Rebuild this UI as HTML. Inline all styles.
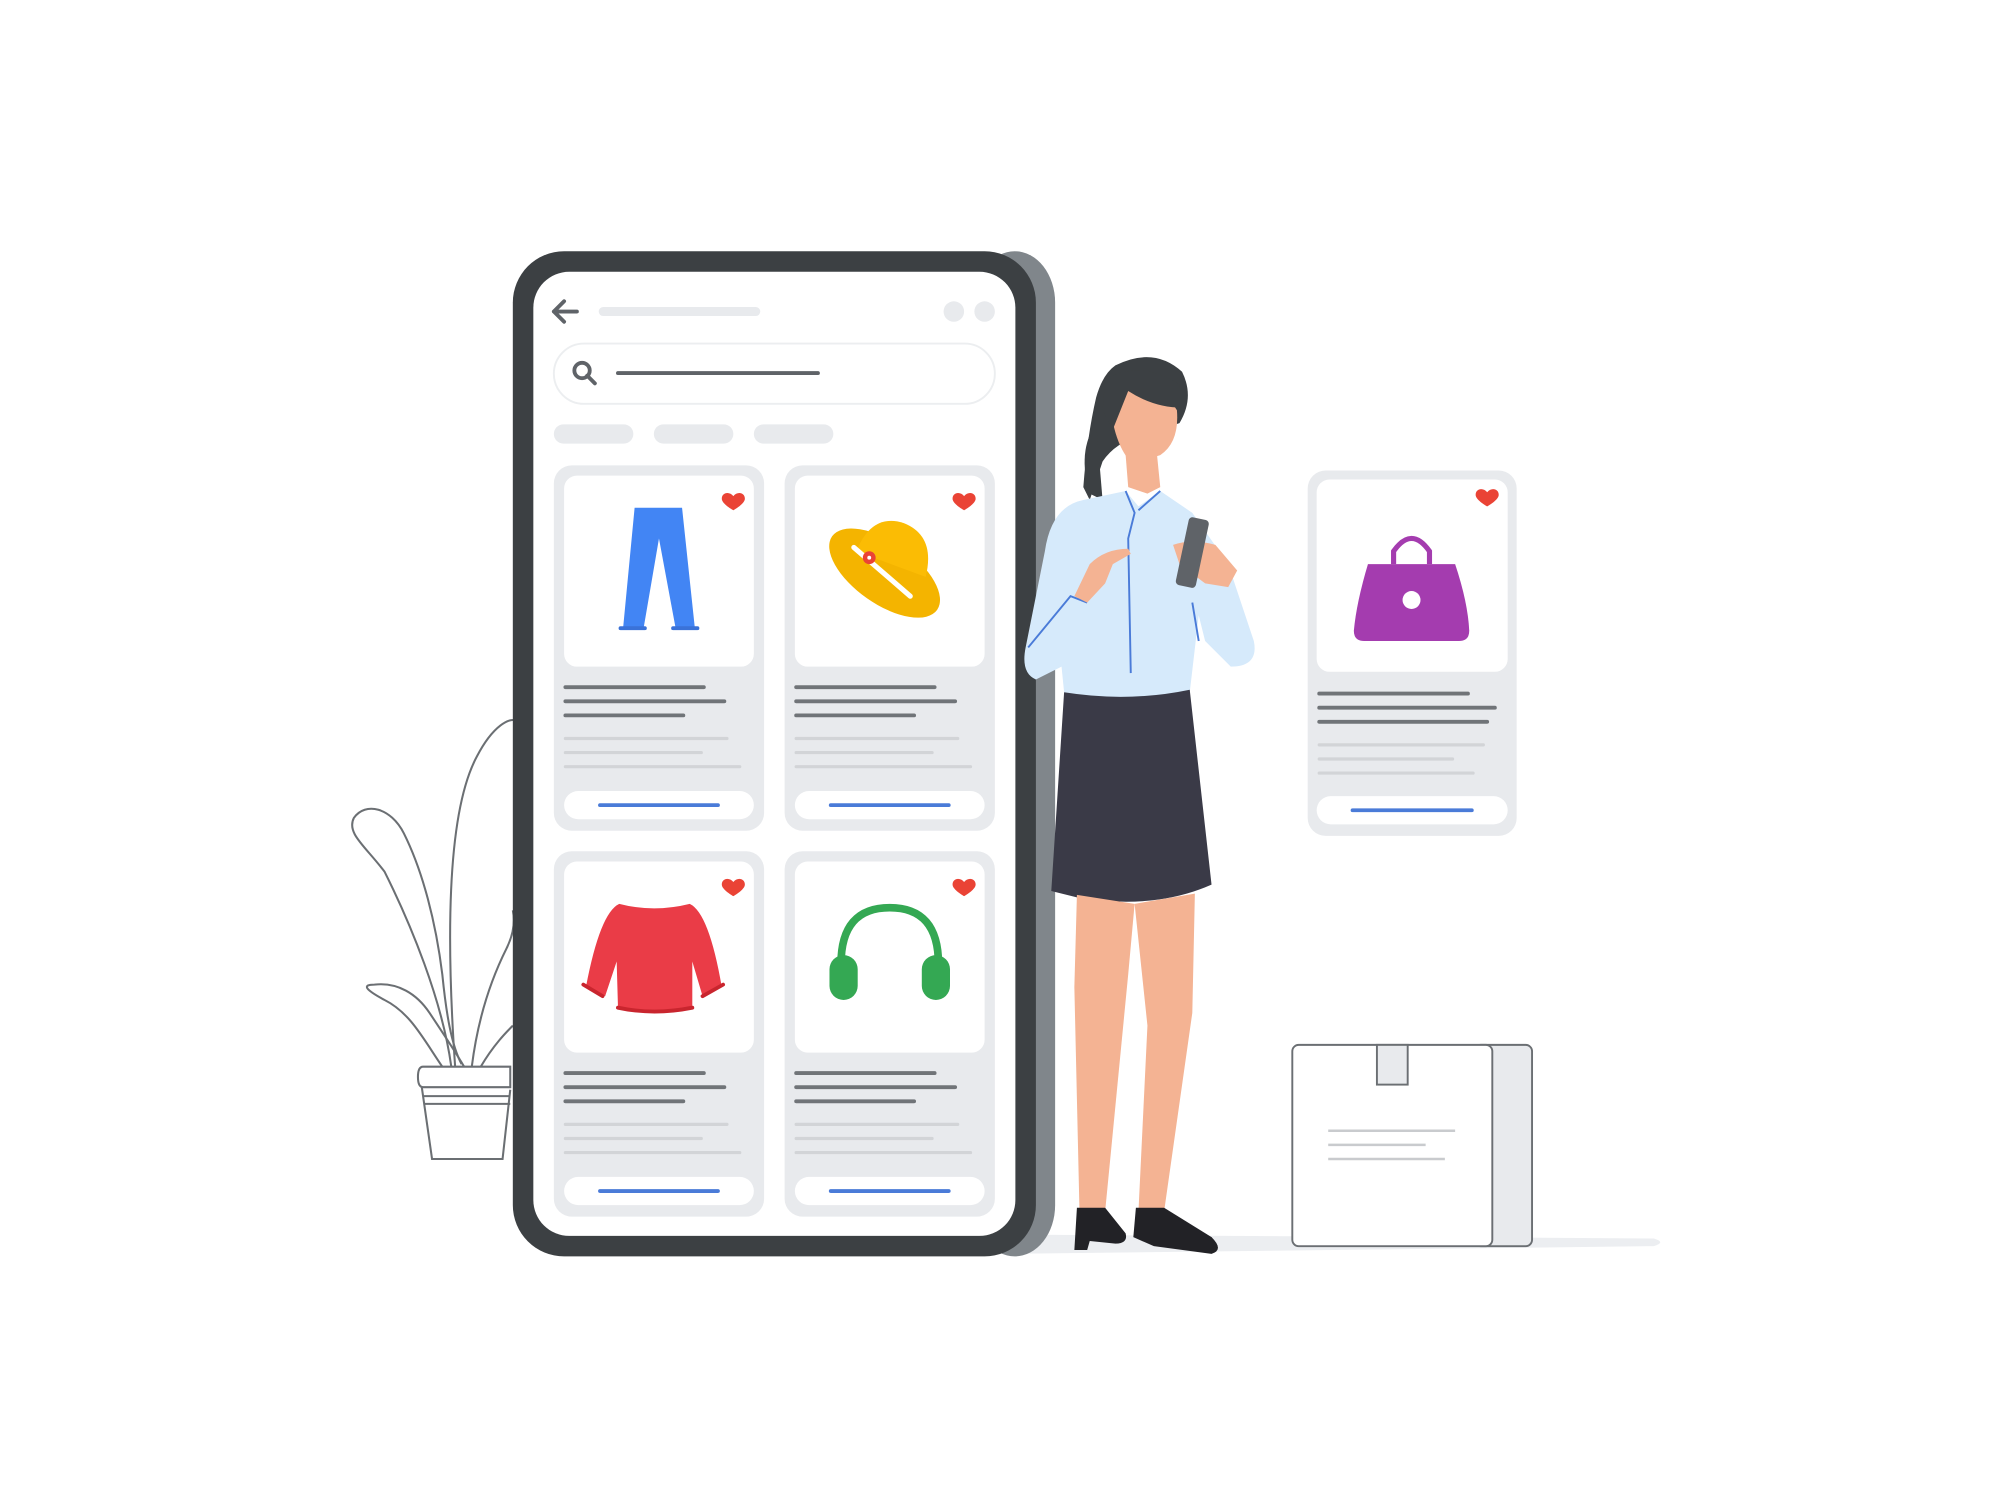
<!DOCTYPE html>
<html><head><meta charset="utf-8"><style>html,body{margin:0;padding:0;background:#fff;width:2000px;height:1500px;overflow:hidden}svg{display:block}</style></head>
<body>
<svg width="2000" height="1500" viewBox="0 0 1560 1170" xmlns="http://www.w3.org/2000/svg">
<rect width="1560" height="1170" fill="#fff"/>
<!-- ground -->
<path d="M790 963 L1290 966 Q1300 969 1290 972 L790 978 Z" fill="#eceef1"/>
<!-- plant -->
<g fill="none" stroke="#6b6f73" stroke-width="1.6">
<path d="M355 832 C350 760 345 640 372 590 C385 565 398 560 402 562"/>
<path d="M352 832 C345 780 320 720 300 680 C285 660 270 650 276 638 C285 625 305 630 315 650 C330 680 340 720 345 760 C348 790 352 815 360 830"/>
<path d="M345 832 C330 810 320 790 300 780 C285 772 282 768 292 768 C310 766 325 775 335 790 C345 805 355 820 362 832"/>
<path d="M368 832 C372 800 380 770 395 740 C400 730 402 720 400 710"/>
<path d="M375 832 C385 815 395 805 400 800"/>
<path d="M330 832 L398 832 L398 848 L330 848 Q326 848 326 840 Q326 832 330 832 Z"/>
<path d="M329 848 L337 904 L392 904 L398 850"/>
<path d="M330 855 L398 855 M331 861 L398 861"/>
</g>
<!-- phone -->
<rect x="760" y="196" width="63" height="784" rx="40" fill="#80868b"/>
<rect x="400" y="196" width="408" height="784" rx="40" fill="#3c4043"/>
<rect x="416" y="212" width="376" height="752" rx="28" fill="#fff"/>
<path d="M450 243 H432 M440 235 L432 243 L440 251" stroke="#5f6368" stroke-width="3" fill="none" stroke-linecap="round" stroke-linejoin="round"/>
<rect x="467" y="239.5" width="126" height="7" rx="3.5" fill="#e8eaed"/>
<circle cx="744" cy="243" r="8" fill="#e8eaed"/><circle cx="768" cy="243" r="8" fill="#e8eaed"/>
<rect x="432" y="268" width="344" height="47" rx="23.5" fill="#fff" stroke="#eceef0" stroke-width="1.5"/>
<circle cx="454" cy="289" r="6" fill="none" stroke="#5f6368" stroke-width="3"/>
<path d="M458 293 L464 299" stroke="#5f6368" stroke-width="3" stroke-linecap="round"/>
<path d="M482 291 H638" stroke="#5f6368" stroke-width="3" stroke-linecap="round"/>
<rect x="432" y="331" width="62" height="15" rx="7.5" fill="#e8eaed"/>
<rect x="510" y="331" width="62" height="15" rx="7.5" fill="#e8eaed"/>
<rect x="588" y="331" width="62" height="15" rx="7.5" fill="#e8eaed"/>
<defs>
<g id="card">
<rect x="0" y="0" width="164" height="285" rx="14" fill="#e8eaed"/>
<rect x="8" y="8" width="148" height="149" rx="10" fill="#fff"/>
<path d="M140 24 c-3-4-9-3-9 2 c0 4 9 9 9 9 c0 0 9-5 9-9 c0-5-6-6-9-2z" fill="#ea4335"/>
<g stroke-linecap="round" stroke-width="3">
<path d="M9 173 H117 M9 184 H133 M9 195 H101" stroke="#707478"/>
<path d="M9 213 H135 M9 224 H115 M9 235 H145" stroke="#d2d4d7" stroke-width="2.5"/>
</g>
<rect x="8" y="254" width="148" height="22" rx="11" fill="#fff"/>
<path d="M36 265 H128" stroke="#4a7bd8" stroke-width="3" stroke-linecap="round"/>
</g>
</defs>
<use href="#card" x="432" y="363"/>
<use href="#card" x="612" y="363"/>
<use href="#card" x="432" y="664"/>
<use href="#card" x="612" y="664"/>
<!-- pants -->
<path d="M495 396 H532 L542 490 H527 L514 420 L502 490 H486 Z" fill="#4285f4"/>
<path d="M484 490 H503 M525 490 H544" stroke="#3a72d8" stroke-width="3" stroke-linecap="round"/>
<!-- hat -->
<ellipse cx="690" cy="447" rx="50" ry="24" transform="rotate(35 690 447)" fill="#f4b400"/>
<path d="M668 430 Q680 400 705 408 Q730 418 722 450 Z" fill="#fbbc04"/>
<path d="M666 427 L710 465" stroke="#fff" stroke-width="4" stroke-linecap="round"/>
<circle cx="678" cy="435" r="5" fill="#ea4335"/><circle cx="678" cy="435" r="1.5" fill="#fff"/>
<!-- sweater -->
<path d="M483 705 Q510 712 538 705 Q553 712 563 770 L548 777 L540 750 L540 785 Q510 792 482 785 L481 750 L472 777 L457 770 Q468 712 483 705 Z" fill="#ea3c47"/>
<path d="M455 768 L470 777 M548 777 L564 768 M482 786 Q510 792 540 786" stroke="#c9252e" stroke-width="3" stroke-linecap="round" fill="none"/>
<!-- headphones -->
<path d="M656 752 Q656 708 694 708 Q732 708 732 752" fill="none" stroke="#34a853" stroke-width="6"/>
<rect x="647" y="745" width="22" height="35" rx="11" fill="#34a853"/>
<rect x="719" y="745" width="22" height="35" rx="11" fill="#34a853"/>
<!-- side card -->
<rect x="1020" y="367" width="163" height="285" rx="14" fill="#e8eaed"/>
<rect x="1027" y="374" width="149" height="150" rx="10" fill="#fff"/>
<path d="M1160 384 c-3-4-9-3-9 2 c0 4 9 9 9 9 c0 0 9-5 9-9 c0-5-6-6-9-2z" fill="#ea4335"/>
<path d="M1087 440 V430 Q1101 410 1115 430 V440" fill="none" stroke="#a43caf" stroke-width="4"/>
<path d="M1067 440 H1135 Q1145 470 1146 492 Q1146 500 1138 500 H1064 Q1056 500 1056 492 Q1058 470 1067 440 Z" fill="#a43caf"/>
<circle cx="1101" cy="468" r="7" fill="#fff"/>
<g stroke-linecap="round" stroke-width="3">
<path d="M1029 541 H1145 M1029 552 H1166 M1029 563 H1160" stroke="#707478"/>
<path d="M1029 581 H1157 M1029 592 H1133 M1029 603 H1149" stroke="#d2d4d7" stroke-width="2.5"/>
</g>
<rect x="1027" y="621" width="149" height="22" rx="11" fill="#fff"/>
<path d="M1055 632 H1148" stroke="#4a7bd8" stroke-width="3" stroke-linecap="round"/>
<!-- box -->
<rect x="1150" y="815" width="45" height="157" rx="5" fill="#e8eaed" stroke="#6b6f73" stroke-width="1.5"/>
<rect x="1008" y="815" width="156" height="157" rx="5" fill="#fff" stroke="#6b6f73" stroke-width="1.5"/>
<rect x="1074" y="815" width="24" height="31" fill="#e8eaed" stroke="#6b6f73" stroke-width="1.5"/>
<path d="M1036 882 H1135 M1036 893 H1112 M1036 904 H1127" stroke="#c9cbce" stroke-width="2"/>
<!-- woman -->
<path d="M870 285 Q900 270 922 290 Q932 310 920 330 L890 340 Q870 345 860 360 L850 390 L845 380 Q848 340 855 310 Q860 292 870 285 Z" fill="#3c4043"/>
<path d="M865 300 Q880 290 905 300 L918 320 Q920 345 905 355 Q890 360 880 358 Q866 340 865 300 Z" fill="#f4b393"/>
<path d="M862 296 Q890 280 920 300 L922 318 Q900 318 880 305 L868 335 L860 320 Z" fill="#3c4043"/>
<path d="M878 355 L880 380 L895 385 L905 380 L902 350 Z" fill="#f4b393"/>
<path d="M850 385 Q840 352 855 330 L860 390 Z" fill="#3c4043"/>
<path d="M845 390 L878 383 L888 395 L905 383 L930 400 L958 440 L978 500 Q982 520 960 520 L940 500 L935 480 L928 540 Q880 550 830 540 L828 520 L808 530 Q796 525 800 505 L815 430 Q820 395 845 390 Z" fill="#d6eafb"/>
<path d="M878 383 L885 400 L880 420 L882 525 M905 383 L888 398 M930 470 L935 500 M802 505 L835 465 L848 470" fill="none" stroke="#4a7bd8" stroke-width="1.5"/>
<path d="M838 465 L850 440 Q862 428 880 428 L882 432 L868 440 L862 455 L848 470 Z" fill="#f4b393"/>
<path d="M915 425 Q930 420 948 425 L965 445 L958 458 L940 455 L920 440 Z" fill="#f4b393"/>
<rect x="922" y="404" width="16" height="54" rx="3" transform="rotate(12 930 431)" fill="#5f6368"/>
<path d="M830 540 Q880 548 928 538 L945 690 Q900 710 840 700 L820 695 Z" fill="#3a3a47"/>
<path d="M840 698 L885 705 L880 760 L862 945 L842 945 L838 770 Z" fill="#f4b393"/>
<path d="M885 705 L932 697 L930 790 L908 945 L888 945 L895 800 Z" fill="#f4b393"/>
<path d="M840 942 L862 942 L878 962 Q880 970 870 970 L850 968 L848 975 L838 975 Z" fill="#222226"/>
<path d="M886 942 L908 942 L945 965 Q955 975 945 978 L900 972 L884 965 Z" fill="#222226"/>
</svg>
</body></html>
